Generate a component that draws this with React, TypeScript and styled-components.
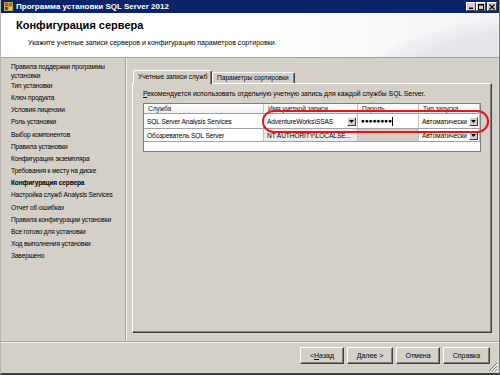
import React from "react";
import styled, { createGlobalStyle } from "styled-components";

const GlobalStyle = createGlobalStyle`
  html, body { margin: 0; padding: 0; width: 500px; height: 375px; overflow: hidden; background: #d4d0c8; }
  * { box-sizing: border-box; }
  body { font-family: "Liberation Sans", Arial, sans-serif; color: #000; }
  #root { width: 500px; height: 375px; }
`;

const Window = styled.div`
  position: relative;
  width: 500px;
  height: 375px;
  display: flex;
  flex-direction: column;
  background: #d4d0c8;
  border-left: 1px solid #b8b4ac;
  border-right: 1px solid #808080;
  border-bottom: 2px solid #404040;
`;

const TitleBar = styled.div`
  height: 13px;
  flex: none;
  background: #0a246a;
  display: flex;
  align-items: center;
  padding: 0 2px 0 3px;
  gap: 3px;
  color: #fff;
  font-size: 8px;
  font-weight: bold;
  line-height: 13px;
`;

const TitleText = styled.span`
  flex: 1;
  white-space: nowrap;
`;

const Controls = styled.div`
  display: flex;
`;

const CtrlBtn = styled.div<{ $gap?: boolean }>`
  width: 10px;
  height: 9px;
  background: #d4d0c8;
  border: 1px solid;
  border-color: #fff #404040 #404040 #fff;
  display: flex;
  align-items: center;
  justify-content: center;
  margin-left: ${(p) => (p.$gap ? "1px" : "0")};
`;

const Header = styled.div`
  position: relative;
  height: 45px;
  flex: none;
  background:
    radial-gradient(ellipse 260px 90px at 560px 70px, rgba(228,228,234,0.9) 60%, rgba(240,240,244,0.6) 75%, rgba(255,255,255,0) 76%),
    linear-gradient(90deg, #ffffff 0%, #ffffff 55%, #f3f3f6 100%);
  border-bottom: 1px solid #a0a0a0;
  padding: 5px 0 0 15px;
  overflow: hidden;
`;

const HeaderTitle = styled.div`
  font-size: 11px;
  font-weight: bold;
  line-height: 14px;
  white-space: nowrap;
`;

const HeaderSub = styled.div`
  font-size: 7px;
  line-height: 10px;
  margin-top: 6px;
  padding-left: 12px;
  white-space: nowrap;
`;

const Body = styled.div`
  height: 284px;
  flex: none;
  display: flex;
  border-bottom: 1px solid #a0a0a0;
  box-shadow: 0 1px 0 #f4f2ee;
`;

const Sidebar = styled.div`
  width: 125px;
  flex: none;
  border-right: 1px solid #a0a0a0;
  padding: 4px 0 0 10px;
  font-size: 6.6px;
  letter-spacing: -0.15px;
`;

const NavItem = styled.div<{ $active?: boolean; $multi?: boolean }>`
  line-height: ${(p) => (p.$multi ? "9px" : "12.15px")};
  font-weight: ${(p) => (p.$active ? "bold" : "normal")};
  white-space: nowrap;
`;

const Main = styled.div`
  flex: 1;
  display: flex;
  flex-direction: column;
  padding: 12px 10px 8px 6px;
  box-shadow: inset 1px 0 0 #f4f2ee;
`;

const TabStrip = styled.div`
  height: 13px;
  display: flex;
  align-items: flex-end;
  padding-left: 1px;
  position: relative;
  z-index: 1;
`;

const Tab = styled.div<{ $active?: boolean }>`
  width: ${(p) => (p.$active ? "79px" : "83px")};
  height: ${(p) => (p.$active ? "14px" : "11px")};
  margin-bottom: ${(p) => (p.$active ? "-1px" : "0")};
  background: #d4d0c8;
  border: 1px solid;
  border-bottom: none;
  border-color: #fff #404040 transparent #fff;
  border-radius: 2px 2px 0 0;
  box-shadow: inset -1px 0 0 #808080;
  font-size: 6.6px;
  line-height: ${(p) => (p.$active ? "12px" : "10px")};
  padding-left: 4px;
  white-space: nowrap;
`;

const Panel = styled.div`
  flex: 1;
  border: 1px solid;
  border-color: #fff #404040 #404040 #fff;
  box-shadow: inset -1px -1px 0 #808080;
  padding: 5px 10px 0 10px;
`;

const PanelText = styled.div`
  font-size: 6.8px;
  line-height: 10px;
  white-space: nowrap;
`;

const Grid = styled.div`
  margin-top: 4px;
  width: 338px;
  height: 49px;
  border: 1px solid #808080;
  background: #fff;
  display: grid;
  grid-template-columns: 120px 94px 61px 61px;
  grid-template-rows: 10px 15px 13px;
  font-size: 6.6px;
  letter-spacing: -0.1px;
`;

const HeadCell = styled.div`
  border-right: 1px solid #c0c0c0;
  border-bottom: 1px solid #a0a0a0;
  padding-left: 4px;
  line-height: 9px;
  color: #202020;
  white-space: nowrap;
  overflow: hidden;
  background: linear-gradient(#ffffff, #f0f0f0);
`;

const Cell = styled.div<{ $bg?: string }>`
  border-right: 1px solid #c0c0c0;
  border-bottom: 1px solid #a0a0a0;
  background: ${(p) => p.$bg || "#fff"};
  display: flex;
  align-items: center;
  padding-left: 3px;
  white-space: nowrap;
  overflow: hidden;
  gap: 1px;
`;

const CellText = styled.span`
  flex: 1;
  overflow: hidden;
`;

const DropBtn = styled.div`
  width: 9px;
  height: 9px;
  flex: none;
  margin-right: 1px;
  background: #d4d0c8;
  border: 1px solid;
  border-color: #fff #404040 #404040 #fff;
  display: flex;
  align-items: center;
  justify-content: center;
`;

const Caret = styled.span`
  display: inline-block;
  width: 1px;
  height: 9px;
  background: #000;
  vertical-align: middle;
`;

const Footer = styled.div`
  flex: 1;
  display: flex;
  justify-content: flex-end;
  align-items: flex-start;
  padding: 5px 9px 0 0;
  gap: 3px;
`;

const Button = styled.button<{ $w: number }>`
  width: ${(p) => p.$w}px;
  height: 17px;
  padding: 0;
  background: #d4d0c8;
  border: 1px solid;
  border-color: #fff #404040 #404040 #fff;
  box-shadow: inset -1px -1px 0 #808080;
  font-family: "Liberation Sans", Arial, sans-serif;
  font-size: 7px;
  color: #000;
  line-height: 14px;
`;

const Highlight = styled.div`
  position: absolute;
  left: 261px;
  top: 110px;
  width: 227px;
  height: 23px;
  border: 2px solid #e8141c;
  border-radius: 12px / 11px;
  pointer-events: none;
`;

const Grip = styled.svg`
  position: absolute;
  right: 1px;
  bottom: 1px;
`;

const U = styled.span`
  text-decoration: underline;
`;

const Arrow = () => (
  <svg width="5" height="3" viewBox="0 0 5 3">
    <path d="M0 0h5L2.5 3z" fill="#000" />
  </svg>
);

const navItems = [
  "Тип установки",
  "Ключ продукта",
  "Условия лицензии",
  "Роль установки",
  "Выбор компонентов",
  "Правила установки",
  "Конфигурация экземпляра",
  "Требования к месту на диске",
  "Конфигурация сервера",
  "Настройка служб Analysis Services",
  "Отчет об ошибках",
  "Правила конфигурации установки",
  "Все готово для установки",
  "Ход выполнения установки",
  "Завершено",
];

export default function App() {
  return (
    <>
      <GlobalStyle />
      <Window>
        <TitleBar>
          <svg width="9" height="9" viewBox="0 0 9 9">
            <rect x="0" y="0" width="9" height="9" fill="#c8a040" />
            <rect x="1" y="1" width="3" height="3" fill="#e04020" />
            <rect x="5" y="1" width="3" height="3" fill="#40a040" />
            <rect x="1" y="5" width="3" height="3" fill="#2060c0" />
            <rect x="5" y="5" width="3" height="3" fill="#f0d040" />
          </svg>
          <TitleText>Программа установки SQL Server 2012</TitleText>
          <Controls>
            <CtrlBtn>
              <svg width="5" height="5" viewBox="0 0 5 5">
                <rect x="0" y="3.5" width="4" height="1.5" fill="#000" />
              </svg>
            </CtrlBtn>
            <CtrlBtn>
              <svg width="6" height="6" viewBox="0 0 6 6">
                <rect x="0.5" y="0.5" width="5" height="5" fill="none" stroke="#000" />
                <rect x="0" y="0" width="6" height="1.5" fill="#000" />
              </svg>
            </CtrlBtn>
            <CtrlBtn $gap>
              <svg width="6" height="6" viewBox="0 0 6 6">
                <path d="M0.5 0.5L5.5 5.5M5.5 0.5L0.5 5.5" stroke="#000" strokeWidth="1.3" />
              </svg>
            </CtrlBtn>
          </Controls>
        </TitleBar>
        <Header>
          <HeaderTitle>Конфигурация сервера</HeaderTitle>
          <HeaderSub>Укажите учетные записи серверов и конфигурацию параметров сортировки.</HeaderSub>
        </Header>
        <Body>
          <Sidebar>
            <NavItem $multi>
              Правила поддержки программы
              <br />
              установки
            </NavItem>
            {navItems.map((t) => (
              <NavItem key={t} $active={t === "Конфигурация сервера"}>
                {t}
              </NavItem>
            ))}
          </Sidebar>
          <Main>
            <TabStrip>
              <Tab $active>Учетные записи служб</Tab>
              <Tab>Параметры сортировки</Tab>
            </TabStrip>
            <Panel>
              <PanelText>
                <U>Р</U>екомендуется использовать отдельную учетную запись для каждой службы SQL Server.
              </PanelText>
              <Grid>
                <HeadCell>Служба</HeadCell>
                <HeadCell>Имя учетной записи</HeadCell>
                <HeadCell>Пароль</HeadCell>
                <HeadCell>Тип запуска</HeadCell>

                <Cell>
                  <CellText>SQL Server Analysis Services</CellText>
                </Cell>
                <Cell>
                  <CellText>AdventureWorks\SSAS</CellText>
                  <DropBtn>
                    <Arrow />
                  </DropBtn>
                </Cell>
                <Cell>
                  <CellText>
                    ●●●●●●●●<Caret />
                  </CellText>
                </Cell>
                <Cell>
                  <CellText>Автоматически</CellText>
                  <DropBtn>
                    <Arrow />
                  </DropBtn>
                </Cell>

                <Cell>
                  <CellText>Обозреватель SQL Server</CellText>
                </Cell>
                <Cell $bg="#ecebe8">
                  <CellText>NT AUTHORITY\LOCALSE...</CellText>
                </Cell>
                <Cell $bg="#d4d0c8" />
                <Cell>
                  <CellText>Автоматически</CellText>
                  <DropBtn>
                    <Arrow />
                  </DropBtn>
                </Cell>
              </Grid>
            </Panel>
          </Main>
        </Body>
        <Footer>
          <Button $w={44}>
            &lt;<U>Н</U>азад
          </Button>
          <Button $w={46}>
            <U>Д</U>алее &gt;
          </Button>
          <Button $w={44}>Отмена</Button>
          <Button $w={47}>Справка</Button>
        </Footer>
        <Highlight />
        <Grip width="10" height="10" viewBox="0 0 10 10">
          <path d="M9 1L1 9M9 4L4 9M9 7L7 9" stroke="#808080" strokeWidth="1" />
          <path d="M10 2L2 10M10 5L5 10M10 8L8 10" stroke="#fff" strokeWidth="1" />
        </Grip>
      </Window>
    </>
  );
}
